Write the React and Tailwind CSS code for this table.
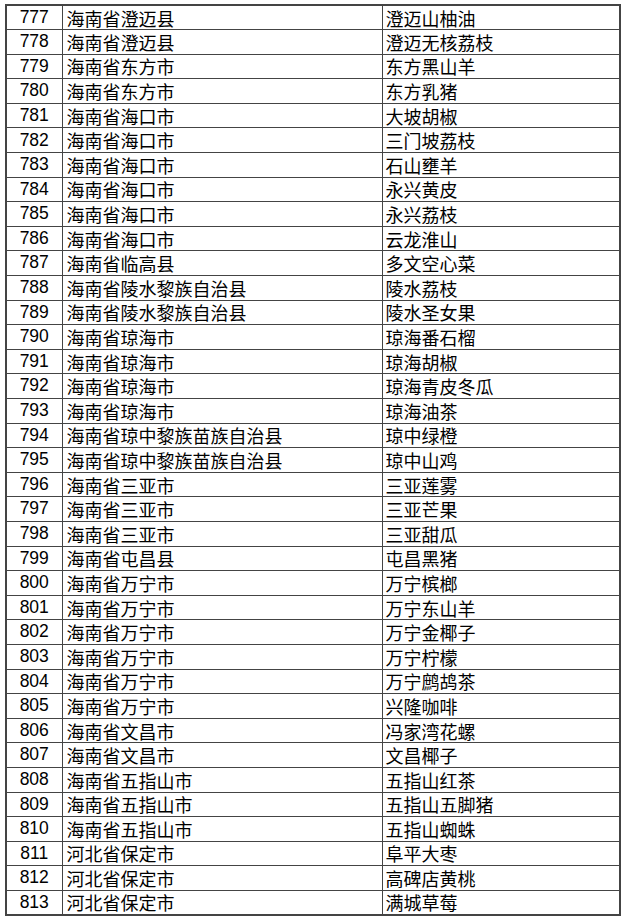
import React from 'react'

const ROWS = [
  [777, '海南省澄迈县', '澄迈山柚油'],
  [778, '海南省澄迈县', '澄迈无核荔枝'],
  [779, '海南省东方市', '东方黑山羊'],
  [780, '海南省东方市', '东方乳猪'],
  [781, '海南省海口市', '大坡胡椒'],
  [782, '海南省海口市', '三门坡荔枝'],
  [783, '海南省海口市', '石山壅羊'],
  [784, '海南省海口市', '永兴黄皮'],
  [785, '海南省海口市', '永兴荔枝'],
  [786, '海南省海口市', '云龙淮山'],
  [787, '海南省临高县', '多文空心菜'],
  [788, '海南省陵水黎族自治县', '陵水荔枝'],
  [789, '海南省陵水黎族自治县', '陵水圣女果'],
  [790, '海南省琼海市', '琼海番石榴'],
  [791, '海南省琼海市', '琼海胡椒'],
  [792, '海南省琼海市', '琼海青皮冬瓜'],
  [793, '海南省琼海市', '琼海油茶'],
  [794, '海南省琼中黎族苗族自治县', '琼中绿橙'],
  [795, '海南省琼中黎族苗族自治县', '琼中山鸡'],
  [796, '海南省三亚市', '三亚莲雾'],
  [797, '海南省三亚市', '三亚芒果'],
  [798, '海南省三亚市', '三亚甜瓜'],
  [799, '海南省屯昌县', '屯昌黑猪'],
  [800, '海南省万宁市', '万宁槟榔'],
  [801, '海南省万宁市', '万宁东山羊'],
  [802, '海南省万宁市', '万宁金椰子'],
  [803, '海南省万宁市', '万宁柠檬'],
  [804, '海南省万宁市', '万宁鹧鸪茶'],
  [805, '海南省万宁市', '兴隆咖啡'],
  [806, '海南省文昌市', '冯家湾花螺'],
  [807, '海南省文昌市', '文昌椰子'],
  [808, '海南省五指山市', '五指山红茶'],
  [809, '海南省五指山市', '五指山五脚猪'],
  [810, '海南省五指山市', '五指山蜘蛛'],
  [811, '河北省保定市', '阜平大枣'],
  [812, '河北省保定市', '高碑店黄桃'],
  [813, '河北省保定市', '满城草莓'],
]

const cjk = { fontFamily: '"Noto Sans CJK SC", sans-serif' }

export default function App() {
  return (
    <div className="w-[625px] h-[920px] bg-white pt-[4px] pl-[5px]">
      <table className="border-collapse border-2 border-[#444] w-[616px] table-fixed text-black">
        <colgroup>
          <col className="w-[56px]" />
          <col className="w-[320px]" />
          <col />
        </colgroup>
        <tbody>
          {ROWS.map(([no, place, product]) => (
            <tr key={no} className="h-[24.6px]">
              <td className="border border-[#444] text-center text-[17.5px] leading-none p-0 font-['Liberation_Sans',Arial,sans-serif]">
                {no}
              </td>
              <td className="border border-[#444] text-[18px] leading-none pl-[4px] py-0 whitespace-nowrap" style={cjk}>
                {place}
              </td>
              <td className="border border-[#444] text-[18px] leading-none pl-[3px] py-0 whitespace-nowrap" style={cjk}>
                {product}
              </td>
            </tr>
          ))}
        </tbody>
      </table>
    </div>
  )
}
